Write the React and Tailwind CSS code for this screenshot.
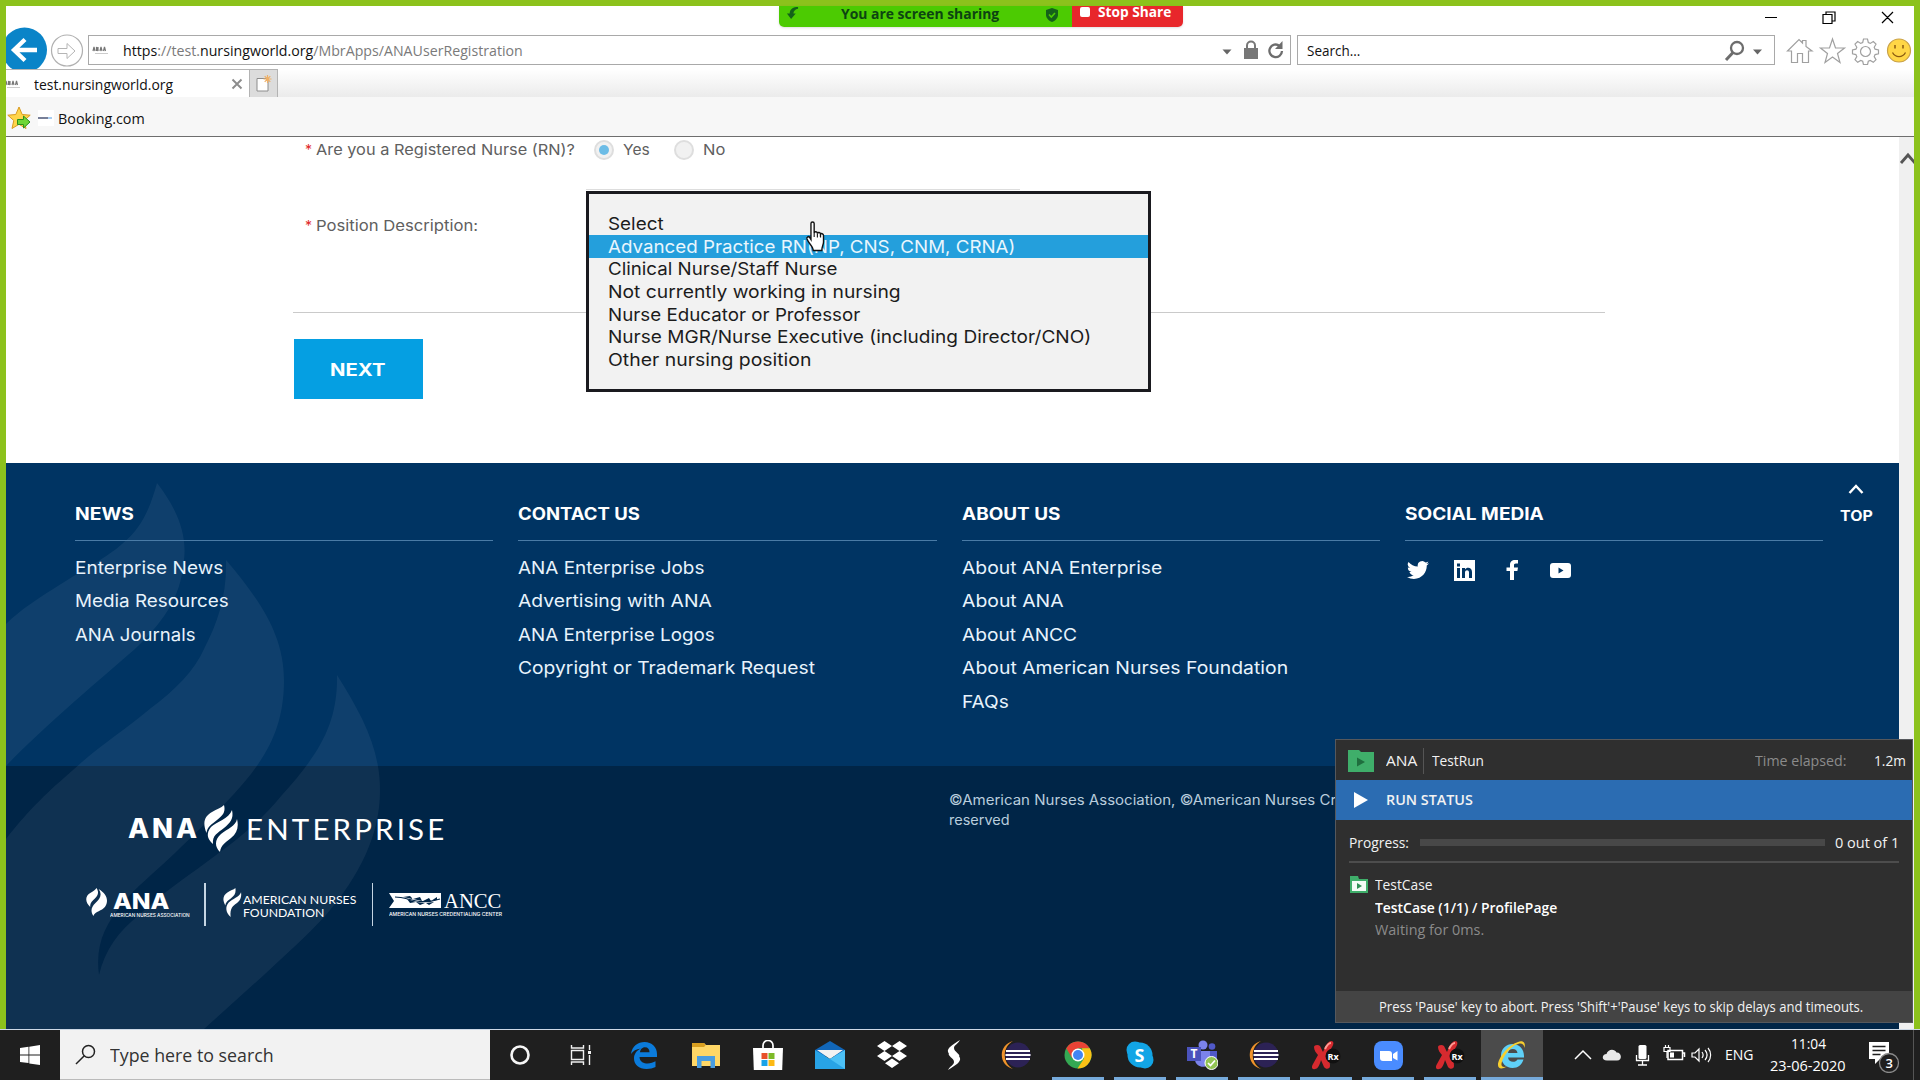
import { useLayoutEffect, useRef, useState } from "react";

const MONT = "font-['Inter',sans-serif]";
const SEGOE = "font-['Open_Sans','Noto_Sans',sans-serif]";

/* One line of text, stretched horizontally to an exact width. */
function Fit({ w, className = "", children }) {
  const ref = useRef(null);
  const [s, setS] = useState(1);
  useLayoutEffect(() => {
    const measure = () => ref.current && setS(w / ref.current.offsetWidth);
    measure();
    document.fonts?.ready.then(measure);
  }, [w]);
  return (
    <span className={"block shrink-0 whitespace-nowrap text-left " + className} style={{ width: w }}>
      <span ref={ref} className="inline-block origin-left whitespace-nowrap" style={{ transform: `scaleX(${s})` }}>
        {children}
      </span>
    </span>
  );
}

function Favicon() {
  return (
    <svg width="18" height="12" viewBox="0 0 18 12" className="shrink-0">
      <path d="M1 7l1-4 1 4M4.500 7V3l1.500 4V3M8 7l1-4 1 4M11.500 7l1-4 1 4" stroke="#777" strokeWidth="1.200" fill="none" />
      <path d="M3 9.500h13" stroke="#ccc" strokeWidth="1" />
    </svg>
  );
}

function ShareBar() {
  return (
    <div className={"absolute left-[779px] top-[6px] z-20 flex h-[21px] w-[404px] rounded-b-[5px] shadow " + SEGOE}>
      <div className="flex h-full w-[293px] items-start rounded-bl-[5px] bg-[#4ccb02] pl-[7px]">
        <svg width="13" height="15" viewBox="0 0 14 16" className="mt-0">
          <path d="M13 1C8 1 4 3 4 8H1l4.500 6 5-6H8C8 5.500 10 3.500 13 3z" fill="#14611a" />
        </svg>
        <Fit w={158} className="ml-[42px] text-[14px] font-bold leading-[16px] text-[#0c4412]">You are screen sharing</Fit>
        <svg width="14" height="16" viewBox="0 0 14 16" className="ml-[46px] mt-px">
          <path d="M7 1l6 2v5c0 3-3 6-6 7-3-1-6-4-6-7V3z" fill="#14611a" />
          <path d="M4 7.500l2.300 2.500L10 6" stroke="#4ccb02" strokeWidth="1.600" fill="none" />
        </svg>
      </div>
      <div className="flex h-full flex-1 rounded-br-[5px] bg-[#e8272b] pl-[8px]">
        <div className="mt-[1px] size-[10px] rounded-[2px] bg-white" />
        <Fit w={73} className="ml-[8px] text-[13.500px] font-bold leading-[13px] text-white">Stop Share</Fit>
      </div>
    </div>
  );
}

function TitleRow() {
  return (
    <div className="flex h-[29px] justify-end pr-[20px]">
      <svg width="130" height="24" viewBox="0 0 130 24" fill="none" stroke="#000" strokeWidth="1.200">
        <path d="M1 11.500h12M59 8.500h9v9h-9zM62 8.500V6h9v9h-3M118 6l11 11M129 6l-11 11" />
      </svg>
    </div>
  );
}

function AddressRow() {
  return (
    <div className="flex h-[34px] items-start">
      <div className="relative h-[34px] w-[82px]">
        <svg width="82" height="42" viewBox="0 0 82 42" className="absolute left-0 top-[-8px]">
          <circle cx="18.500" cy="23" r="22.500" fill="#0a84c8" />
          <path d="M19 12.500 8 23l11 10.500M8.500 23H31" stroke="#fff" strokeWidth="4.300" fill="none" />
          <circle cx="61" cy="23.500" r="15.500" fill="#fff" stroke="#b0b0b0" strokeWidth="1.200" />
          <path d="M52 21.500h9v-5l8 7.500-8 7.500v-5h-9z" stroke="#b5b5b5" strokeWidth="1" fill="#fff" />
        </svg>
      </div>
      <div className="flex h-[30px] w-[1203px] items-center border border-[#a9a9a9] bg-white pl-[3px]">
        <Favicon />
        <Fit w={400} className={"ml-[13px] text-[15px] leading-[20px] text-[#7a7a7a] " + SEGOE}>
          <span className="text-[#111]">https</span>://test.<span className="text-[#111]">nursingworld.org</span>/MbrApps/ANAUserRegistration
        </Fit>
        <svg width="70" height="28" viewBox="0 0 70 28" className="ml-auto mr-[1px]">
          <path d="M3.500 13.500h9l-4.500 5z" fill="#666" />
          <path d="M25 12h14v11H25z" fill="#777" />
          <path d="M28 13V9.500a4 4 0 0 1 8 0V13" stroke="#777" strokeWidth="2" fill="none" />
          <path d="M60.500 9.800A6.300 6.300 0 1 0 63 15" stroke="#6d6d6d" strokeWidth="2.300" fill="none" />
          <path d="M63.500 5v8h-7.500z" fill="#6d6d6d" />
        </svg>
      </div>
      <div className="ml-[6px] flex h-[30px] w-[478px] items-center border border-[#a9a9a9] bg-white pl-[9px]">
        <Fit w={53} className={"pt-px text-[14.500px] leading-[20px] text-[#111] " + SEGOE}>Search...</Fit>
        <svg width="42" height="28" viewBox="0 0 42 28" className="ml-auto mr-[10px]">
          <circle cx="15" cy="12" r="6" stroke="#6d6d6d" strokeWidth="2.300" fill="none" />
          <path d="M11 16.500 4 24" stroke="#6d6d6d" strokeWidth="3" />
          <path d="M31 13.500h9l-4.500 5z" fill="#666" />
        </svg>
      </div>
      <svg width="127" height="30" viewBox="0 0 127 30" className="ml-[11px]" fill="#fff" stroke="#a0a0a0" strokeWidth="1.200">
        <path d="M1.500 16 13 4.500l3.500 3.500V5.500h3.500v6L26 16h-3.500v11.500h-6v-9h-5v9h-6V16z" />
        <path d="M46.500 4l3 9h9l-7 5.500 2.500 9-7.500-5.500-7.500 5.500 2.500-9-7-5.500h9z" />
        <path d="M77.500 4h4l.8 3.500 2 .9 3-1.900 2.700 2.700-1.800 3 .9 2 3.400.8v3.800l-3.400.8-.9 2 1.800 3-2.700 2.700-3-1.900-2 .9-.8 3.400h-4l-.8-3.400-2-.9-3 1.900-2.700-2.700 1.800-3-.9-2-3.400-.8V15l3.400-.8.9-2-1.800-3 2.700-2.700 3 1.900 2-.9z" />
        <circle cx="79.500" cy="16.500" r="5" />
        <circle cx="113" cy="15.500" r="11.500" fill="#ffd646" stroke="#c9a24a" />
        <path d="M109 10v3.500M117 10v3.500" stroke="#8a5a10" strokeWidth="1.500" />
        <path d="M106.500 17.500c3 5.500 10 5.500 13 0" stroke="#8a5a10" strokeWidth="1.300" fill="none" />
      </svg>
    </div>
  );
}

function TabRow() {
  return (
    <div className="flex h-[28px] bg-linear-to-b from-white to-[#ebebeb]">
      <div className="flex h-full w-[243px] items-center border-t border-[#b5b5b5] bg-white">
        <span className="-ml-[2px]"><Favicon /></span>
        <Fit w={139} className={"ml-[12px] pt-[2px] text-[14.500px] leading-[20px] text-[#111] " + SEGOE}>test.nursingworld.org</Fit>
        <svg width="12" height="12" viewBox="0 0 12 12" className="ml-[58px]">
          <path d="M1.500 1.500l9 9M10.500 1.500l-9 9" stroke="#8c8c8c" strokeWidth="1.900" />
        </svg>
      </div>
      <div className="flex h-full w-[29px] items-center justify-center border border-b-0 border-[#b3b3b3] bg-[#dcdcdc]">
        <svg width="17" height="18" viewBox="0 0 17 18">
          <path d="M2 3.500h11v12.500H2z" fill="#fff" stroke="#8c8c8c" />
          <path d="M12.500 0v8M8.500 4h8M9.700 1.200l5.600 5.600M15.300 1.200 9.700 6.800" stroke="#efb066" strokeWidth="1.200" />
        </svg>
      </div>
    </div>
  );
}

function FavoritesRow() {
  return (
    <div className="flex h-[40px] items-center border-b border-[#6e6e6e] bg-[#f7f7f7] pl-px pt-[2px]">
      <svg width="24" height="24" viewBox="0 0 24 24">
        <path d="M12 1l3.200 7.500 8 .7-6 5.300 1.800 8L12 18.300 5 22.500l1.800-8-6-5.300 8-.7z" fill="#ffd54a" stroke="#d99a20" />
        <path d="M10.500 13.500h6V10l6.500 6-6.500 6v-3.500h-6z" fill="#6fd636" stroke="#2b8f1c" />
      </svg>
      <div className="ml-[7px] flex h-[16px] w-[16px] items-center bg-white">
        <div className="h-[2px] w-[10px] bg-[#777f98]" />
        <div className="h-[2px] w-[4px] bg-[#a9cdf0]" />
      </div>
      <Fit w={87} className={"ml-[4px] pt-[2px] text-[14.500px] leading-[20px] text-[#111] " + SEGOE}>Booking.com</Fit>
    </div>
  );
}

const OPTIONS = [
  ["Select", 56],
  ["Advanced Practice RN(NP, CNS, CNM, CRNA)", 407],
  ["Clinical Nurse/Staff Nurse", 229],
  ["Not currently working in nursing", 293],
  ["Nurse Educator or Professor", 252],
  ["Nurse MGR/Nurse Executive (including Director/CNO)", 483],
  ["Other nursing position", 203],
];

function PositionMenu() {
  return (
    <div className="absolute left-[580px] top-[54px] z-10 h-[201px] w-[565px] border-[3px] border-[#1a1a1f] bg-[#f2f2f2] pt-[18px]">
      {OPTIONS.map(([label, w], i) => (
        <div
          key={label}
          className={
            "flex h-[22.800px] items-center pl-[19px] text-[17.500px] leading-[22px] " +
            (i === 1 ? "bg-[#249fdc] pt-[2px] text-[#e9f6fd]" : i === 0 ? "pt-[2px] text-[#1c1c1c]" : "text-[#1c1c1c]")
          }
        >
          <Fit w={w}>{label}</Fit>
        </div>
      ))}
      <svg width="22" height="32" viewBox="0 0 24 32" preserveAspectRatio="none" className="absolute left-[216px] top-[27px]">
        <path
          d="M6.500 2.500c0-2 3.500-2 3.500 0V12c.5-1.700 3.500-1.500 3.500.5.600-1.500 3.400-1.200 3.400.8.700-1.200 3.300-.8 3.300 1.200V21c0 3-1.800 4-1.800 8.500H9c0-4-5-7-6.800-11.500-.7-2 1.700-3.300 3-1.500l1.300 2z"
          fill="#fff" stroke="#111" strokeWidth="1.500"
        />
        <path d="M10 12v4M13.500 12.500v4M17 13.500v3" stroke="#111" strokeWidth="1.200" />
      </svg>
    </div>
  );
}

function FormArea() {
  return (
    <div className={"relative h-[326px] bg-white " + MONT}>
      <div className="flex h-[26px] items-center pl-[299px] text-[15px] leading-[20px] text-[#606060]">
        <span className="w-[11px] text-[14px] text-[#e02828]">*</span>
        <Fit w={259}>Are you a Registered Nurse (RN)?</Fit>
        <div className="ml-[19px] flex size-[20px] items-center justify-center rounded-full border-2 border-[#dedede] bg-[#f1f1f1]">
          <div className="size-[10px] rounded-full bg-[#6cbce6]" />
        </div>
        <Fit w={27} className="ml-[9px]">Yes</Fit>
        <div className="ml-[24px] size-[20px] rounded-full border-2 border-[#dedede] bg-[#f1f1f1]" />
        <Fit w={22} className="ml-[9px]">No</Fit>
      </div>
      <div className="mt-[26px] h-px w-[434px] translate-x-[580px] bg-[#ddd]" />
      <div className="mt-[26px] flex h-[20px] items-center pl-[299px] text-[15px] leading-[20px] text-[#606060]">
        <span className="w-[11px] text-[14px] text-[#e02828]">*</span>
        <Fit w={162}>Position Description:</Fit>
      </div>
      <div className="ml-[287px] mt-[76px] h-px w-[1312px] bg-[#cacaca]" />
      <button className="ml-[288px] mt-[26px] flex h-[60px] w-[129px] items-center bg-[#059fe2] pl-[36px] pt-[3px] text-[17px] font-bold text-white">
        <Fit w={56}>NEXT</Fit>
      </button>
      <PositionMenu />
    </div>
  );
}

function Flame({ className }) {
  return (
    <svg viewBox="0 0 34 47" className={className} preserveAspectRatio="none" fill="#fff">
      <path d="M20 0c2 8-2 11-7 15S3 22 2.500 28C-2 17 1 11 8 7c5-3 9-4 12-7z" />
      <path d="M28 5c2 9-2 13-8 18S8 30 9 39c-6-5-7-11-2-17 5-5 18-8 21-17z" />
      <path d="M33 14c2 8 0 14-6 19s-10 7-11 14c-6-6-5-13 1-18s15-8 16-15z" />
    </svg>
  );
}

/* Small two-tongue flame of the foundation and association marks. */
function SmallFlame({ className, closed }) {
  return (
    <svg viewBox="0 0 20 28" className={className} preserveAspectRatio="none" fill="#fff">
      <path d={closed ? "M10 0c3 5 1 8-2 11s-4 4-4 8C-1 14-1 8 4 5c3-2 5-3 6-5z" : "M13 0c1 5-1 7-4 9.500S3 13 2.500 17C-1 11 0 7 5 4c3-2 6-2 8-4z"} />
      <path d={closed ? "M12 1c8 5 10 12 6 18-3 4-9 4-11 9-3-5-2-9 2-13s7-8 3-14z" : "M19 4c1 6-2 9-5 11s-7 4-6 13c-5-4-6-10-2-14s11-5 13-10z"} />
    </svg>
  );
}

function FooterHeading({ children, w }) {
  return (
    <div className="mb-[10px] h-[46px] border-b border-[#4a7ba6] pt-[8px] text-[17px] font-bold leading-[22px] text-white">
      <Fit w={w}>{children}</Fit>
    </div>
  );
}

const COLUMNS = [
  { title: ["NEWS", 59], links: [["Enterprise News", 148], ["Media Resources", 154], ["ANA Journals", 121]] },
  { title: ["CONTACT US", 122], links: [["ANA Enterprise Jobs", 186], ["Advertising with ANA", 194], ["ANA Enterprise Logos", 197], ["Copyright or Trademark Request", 297]] },
  { title: ["ABOUT US", 98], links: [["About ANA Enterprise", 200], ["About ANA", 102], ["About ANCC", 115], ["About American Nurses Foundation", 326], ["FAQs", 47]] },
];

function Footer() {
  return (
    <div className={"relative " + MONT}>
      <div className="flex h-[303px] bg-[#003463] pl-[69px] pt-[32px]">
        {COLUMNS.map((c) => (
          <div key={c.title[0]} className="relative z-10 mr-[25px] w-[418.400px] shrink-0">
            <FooterHeading w={c.title[1]}>{c.title[0]}</FooterHeading>
            {c.links.map(([t, w]) => (
              <div key={t} className="flex h-[33.500px] items-center text-[17.500px] leading-[22px] text-[#e8f3fc]">
                <Fit w={w}>{t}</Fit>
              </div>
            ))}
          </div>
        ))}
        <div className="w-[418px] shrink-0">
          <FooterHeading w={139}>SOCIAL MEDIA</FooterHeading>
          <div className="flex items-center pl-[2px] pt-[8px]">
            <svg width="22" height="22" viewBox="0 0 24 24" fill="#fff"><path d="M23.950 4.570a10 10 0 0 1-2.820.77 4.960 4.960 0 0 0 2.160-2.720c-.95.550-2 .95-3.130 1.180a4.920 4.920 0 0 0-8.380 4.480C7.690 8.100 4.070 6.130 1.640 3.160a4.920 4.920 0 0 0 1.520 6.570 4.900 4.900 0 0 1-2.230-.61v.06a4.920 4.920 0 0 0 3.950 4.830 5 5 0 0 1-2.210.08 4.940 4.940 0 0 0 4.600 3.420A9.870 9.870 0 0 1 0 19.540a13.990 13.990 0 0 0 7.550 2.210c9.050 0 14-7.500 14-13.980 0-.21 0-.42-.02-.63a9.940 9.940 0 0 0 2.420-2.570z" /></svg>
            <svg width="21" height="21" viewBox="0 0 21 21" className="ml-[25px]"><path d="M0 0h21v21H0z" fill="#fff" /><path d="M3 8h3v10H3zM3 3.500h3v3H3zM8 8h3v1.500c1.500-2.500 7-2.500 7 2.500v6h-3v-5.500c0-3-4-3-4 0V18H8z" fill="#003463" /></svg>
            <svg width="13" height="20" viewBox="0 0 13 20" className="ml-[31px]"><path d="M4 20v-9H.5V7.500H4V5c0-3.500 2-5 5-5h3v3.500h-2C8.300 3.500 8 4.200 8 5.300v2.200h4l-.6 3.500H8v9z" fill="#fff" /></svg>
            <svg width="21" height="15" viewBox="0 0 21 15" className="ml-[31px]"><rect width="21" height="15" rx="3" fill="#fff" /><path d="M8.500 4.500v6l5-3z" fill="#003463" /></svg>
          </div>
        </div>
        <div className="ml-[16px] flex w-[34px] flex-col items-center text-[14px] font-bold leading-[18px] text-white">
          <svg width="16" height="12" viewBox="0 0 16 12" className="-mt-[12px] shrink-0"><path d="M1.500 10 8 3l6.500 7" stroke="#fff" strokeWidth="2.400" fill="none" /></svg>
          <Fit w={33} className="mt-[12px]">TOP</Fit>
        </div>
      </div>
      <div className="flex h-[263px] bg-[#002547]">
        <div className="relative z-10 w-[943px] shrink-0">
          <div className="flex items-center pl-[122px] pt-[39px] text-white">
            <Fit w={72} className="pt-px text-[27px] font-extrabold leading-[46px] tracking-[3px]">ANA</Fit>
            <Flame className="ml-[4px] h-[47px] w-[34px]" />
            <Fit w={201} className="ml-[8px] text-[28px] leading-[46px] tracking-[3px] font-['Lato',sans-serif]">ENTERPRISE</Fit>
          </div>
          <div className="mt-[31px] flex h-[43px] items-center pl-[80px] text-white">
            <SmallFlame closed className="-mt-[6px] h-[28px] w-[21px]" />
            <div className="ml-[3px] w-[82px]">
              <Fit w={56} className="ml-[3px] text-[21px] font-extrabold leading-[20px]">ANA</Fit>
              <Fit w={80} className="text-[5px] font-medium leading-[6px]">AMERICAN NURSES ASSOCIATION</Fit>
            </div>
            <div className="ml-[12px] h-[43px] w-[1.500px] bg-[#c5d5e3]" />
            <SmallFlame className="-mt-[4px] ml-[17px] h-[29px] w-[19px]" />
            <div className="ml-[1px] mt-[4px] w-[113px] text-[11.500px] leading-[12.500px] font-['Lato',sans-serif]">
              <Fit w={113}>AMERICAN NURSES</Fit>
              <Fit w={81}>FOUNDATION</Fit>
            </div>
            <div className="ml-[16px] h-[43px] w-[1.500px] bg-[#c5d5e3]" />
            <div className="ml-[16px] w-[113px]">
              <div className="flex items-center">
                <svg width="52" height="15" viewBox="0 0 52 15"><path d="M0 0h52v15H0l5-7z" fill="#fff" /><path d="M6 4c14 0 24 9 45 2" stroke="#002547" strokeWidth="1.200" fill="none" /><path d="M14 4l7-1 3 3zM24 6l7-2 2 4zM34 8l6-3 2 3zM42 8l6-4v3zM18 6l3 4 6-1zM27 9l4 3 5-2zM37 10l3 2 5-3z" fill="#002547" /></svg>
                <Fit w={57} className="ml-[3px] text-[21px] leading-[18px] font-['Liberation_Serif',serif]">ANCC</Fit>
              </div>
              <Fit w={113} className="text-[5px] font-medium leading-[8px]">AMERICAN NURSES CREDENTIALING CENTER</Fit>
            </div>
          </div>
        </div>
        <div className="relative z-10 w-[500px] pt-[24px] text-[14px] leading-[20px] text-[#b9cddd]">
          <Fit w={387}>©American Nurses Association, ©American Nurses Cr</Fit>
          <Fit w={61}>reserved</Fit>
        </div>
      </div>
      <svg width="400" height="566" viewBox="6 463 400 566" className="absolute left-0 top-0" fill="#fff" fillOpacity="0.060">
        <path d="M157 483C178 510 187 535 184 560C181 600 160 625 135 649C105 675 40 730 6 766V624C20 610 40 597 61 584C90 566 110 555 122 544C142 528 150 508 157 483z" />
        <path d="M226 560C260 600 284 635 284 680C284 730 265 760 233 795C210 820 190 838 175 853C155 872 135 888 122 904C105 925 95 945 99 975C105 950 118 932 139 915C160 895 185 878 204 864C240 838 262 820 282 795C318 755 338 725 337 675C362 715 380 748 380 790C380 835 360 875 326 915C305 938 285 955 265 974L204 1029H6V839C30 808 50 790 73 770C100 745 125 730 151 708C175 690 195 670 204 649C218 622 227 595 226 560z" />
      </svg>
    </div>
  );
}

function RunPanel() {
  return (
    <div className={"absolute left-[1335px] top-[739px] z-30 flex h-[284px] w-[578px] flex-col border border-[#56585c] bg-[#2f2f2f] text-[14.500px] leading-[20px] text-[#f2f2f2] " + SEGOE}>
      <div className="flex h-[40px] items-center pl-[12px] pt-px">
        <svg width="26" height="22" viewBox="0 0 26 22"><path d="M0 0h11l2 2h13v20H0z" fill="#3fae6a" /><path d="M9 7.500v9l8-4.500z" fill="#1f6e3e" /></svg>
        <Fit w={31} className="ml-[12px]">ANA</Fit>
        <div className="mx-[6px] h-[26px] w-px bg-[#555]" />
        <Fit w={52} className="ml-[2px]">TestRun</Fit>
        <Fit w={91} className="ml-[271px] text-[#8b8b8b]">Time elapsed:</Fit>
        <Fit w={32} className="ml-[28px]">1.2m</Fit>
      </div>
      <div className="flex h-[40px] items-center bg-[#2b6cb2] pl-[18px]">
        <svg width="14" height="16" viewBox="0 0 14 16"><path d="M0 0v16l14-8z" fill="#fff" /></svg>
        <Fit w={87} className="ml-[18px] font-semibold">RUN STATUS</Fit>
      </div>
      <div className="mx-[13px] flex h-[43px] items-center border-b-2 border-[#4d4d4d] pt-[4px]">
        <Fit w={60}>Progress:</Fit>
        <div className="ml-[11px] h-[7px] w-[405px] bg-[#484848]" />
        <Fit w={64} className="ml-[10px]">0 out of 1</Fit>
      </div>
      <div className="flex flex-1 items-start pl-[14px] pt-[11px]">
        <svg width="18" height="17" viewBox="0 0 18 17" className="mt-[2px]"><path d="M0 0h8l1 3h9v14H0z" fill="#3fae6a" /><path d="M2 5h14v10H2z" fill="#f2fbf5" /><path d="M7 7v6l5-3z" fill="#2f8f55" /></svg>
        <div className="ml-[7px] mt-px">
          <Fit w={57}>TestCase</Fit>
          <Fit w={182} className="mt-[3px] font-semibold text-white">TestCase (1/1) / ProfilePage</Fit>
          <Fit w={109} className="mt-[2px] text-[#8b8b8b]">Waiting for 0ms.</Fit>
        </div>
      </div>
      <div className="flex h-[31px] items-center bg-[#444] pl-[43px] text-[14px]">
        <Fit w={484}>Press 'Pause' key to abort. Press 'Shift'+'Pause' keys to skip delays and timeouts.</Fit>
      </div>
    </div>
  );
}

function Eclipse() {
  return (
    <svg width="30" height="30" viewBox="0 0 30 30">
      <path d="M12 1C-3 5-3 25 12 29 1 23 1 7 12 1z" fill="#f0932b" />
      <circle cx="17" cy="15" r="12.500" fill="#2c2255" />
      <path d="M5 11h24M4.500 15h25M5 19h24" stroke="#fff" strokeWidth="2.200" />
    </svg>
  );
}

function RxIcon() {
  return (
    <svg width="30" height="30" viewBox="0 0 30 30">
      <path d="M3 7c0-2 4-3 6-1l3 6c2-5 4-10 8-11 3 0 3 3 1 6l-5 9c2 3 3 6 3 10 0 3-4 4-6 1l-3-7c-1 4-3 9-6 9-3 1-4-2-2-5l5-9c-2-2-4-5-4-8z" fill="#d62a2f" />
      <path d="M14 9c2-4 4-6 6-6" stroke="#ff9c94" strokeWidth="2" fill="none" />
      <circle cx="22" cy="16" r="7.500" fill="#111" />
      <text x="16.500" y="19.500" fontSize="9" fontWeight="700" fill="#fff" fontFamily="Open Sans, sans-serif">Rx</text>
    </svg>
  );
}

const Cortana = () => (
  <svg width="22" height="22" viewBox="0 0 22 22"><circle cx="11" cy="11" r="8.500" stroke="#f5f5f5" strokeWidth="2.600" fill="none" /></svg>
);
const TaskView = () => (
  <svg width="22" height="22" viewBox="0 0 22 22" stroke="#f0f0f0" strokeWidth="1.400" fill="none" className="-ml-[3px]">
    <path d="M1.500 1v3h12V1M1.500 21v-3h12v3M1.500 6.500h12v9h-12zM19.500 1v5M19.500 11v10" />
    <path d="M18 7h3v3h-3z" fill="#f0f0f0" stroke="none" />
  </svg>
);
const Edge = () => (
  <svg width="28" height="28" viewBox="0 0 28 28">
    <path d="M1 13C2 5 8 1 14.500 1 22 1 27 6 27 13v3H9.500c.3 5 4.500 6.500 8 6.500 3 0 6-1 8-2.200V26c-2.500 1.300-5.500 2-9 2C9 28 4 23.500 4 17.500 4 13 6.500 9.500 11 7.500 6 8 3 10 1 13zm9-1.800h9.500c0-3-1.500-5-4.500-5s-4.800 2.500-5 5z" fill="#0b7bdb" />
  </svg>
);
const Explorer = () => (
  <svg width="28" height="26" viewBox="0 0 28 26">
    <path d="M0 1h12l2 2h14v21H0z" fill="#ffd766" /><path d="M0 1h12l1.500 2.500L12 5H0z" fill="#d99f20" />
    <path d="M5 26V14h18v12h-4.500v-7h-9v7z" fill="#4a9de0" />
  </svg>
);
const Store = () => (
  <svg width="30" height="30" viewBox="0 0 30 30">
    <path d="M10 9V5.500a5 5 0 0 1 10 0V9" stroke="#fff" strokeWidth="1.700" fill="none" />
    <path d="M0 8h30l-.8 22H.8z" fill="#fff" />
    <path d="M8.500 13h6v6h-6z" fill="#e8502a" /><path d="M15.500 13h6v6h-6z" fill="#7dba28" />
    <path d="M8.500 20h6v6h-6z" fill="#1aa3e8" /><path d="M15.500 20h6v6h-6z" fill="#fdb913" />
  </svg>
);
const Mail = () => (
  <svg width="30" height="30" viewBox="0 0 30 30">
    <path d="M0 10 15 1l15 9v6H0z" fill="#1166b8" /><path d="M2 10h26l-13 9z" fill="#f2f2f2" />
    <path d="M0 10l15 9 15-9v19H0z" fill="#28a3e6" /><path d="M15 19 30 29V10z" fill="#4cc0f5" />
  </svg>
);
const Dropbox = () => (
  <svg width="30" height="28" viewBox="0 0 30 28" fill="#fff">
    <path d="M7.500 0 15 5l-7.500 5L0 5zM22.500 0 30 5l-7.500 5L15 5zM7.500 10l7.500 5-7.500 5L0 15zM22.500 10l7.500 5-7.500 5-7.500-5zM15 17.500l7 4.700-7 4.700-7-4.700z" />
  </svg>
);
const Bolt = () => (
  <svg width="16" height="30" viewBox="0 0 16 30" fill="#fff">
    <path d="M14 0C6 5 1 8 2 12c1 3 6 5 7 9l4-4c2-3-5-5-5-9 0-3 4-4 6-8zM2 30c8-5 13-8 12-12-1-3-6-5-7-9l-4 4c-2 3 5 5 5 9 0 3-4 4-6 8z" />
  </svg>
);
const Chrome = () => (
  <svg width="28" height="28" viewBox="0 0 28 28">
    <circle cx="14" cy="14" r="13.500" fill="#34a853" />
    <path d="M2.300 7.200A13.500 13.500 0 0 1 25.700 7.300H14L8 17z" fill="#ea4335" />
    <path d="M25.700 7.300A13.500 13.500 0 0 1 13.500 27.500L20 17.500 18 7.300z" fill="#fbc116" />
    <circle cx="14" cy="14" r="6.500" fill="#fff" /><circle cx="14" cy="14" r="5" fill="#4285f4" />
  </svg>
);
const Skype = () => (
  <svg width="28" height="28" viewBox="0 0 28 28">
    <circle cx="14" cy="14" r="12.500" fill="#12a5e6" /><circle cx="9" cy="9" r="8.500" fill="#12a5e6" /><circle cx="19" cy="19" r="8.500" fill="#12a5e6" />
    <text x="8.500" y="20.500" fontSize="18" fontWeight="700" fill="#fff" fontFamily="Open Sans, sans-serif">S</text>
  </svg>
);
const Teams = () => (
  <svg width="32" height="30" viewBox="0 0 32 30">
    <circle cx="17" cy="5" r="4.500" fill="#7b83eb" /><circle cx="26" cy="6.500" r="3.300" fill="#5059c9" />
    <path d="M20 11h11v8c0 3-3 5-6 5z" fill="#5059c9" /><path d="M9 11h15v9c0 9-14 9-15 0z" fill="#7b83eb" />
    <path d="M1 7h14v14H1z" fill="#4b53bc" />
    <text x="4.500" y="18" fontSize="12" fontWeight="700" fill="#fff" fontFamily="Open Sans, sans-serif">T</text>
    <circle cx="25.500" cy="23" r="6.500" fill="#92c353" stroke="#fff" /><path d="M22 23l2.500 2.500 4.500-5" stroke="#fff" strokeWidth="1.700" fill="none" />
  </svg>
);
const Zoom = () => (
  <svg width="29" height="29" viewBox="0 0 29 29">
    <rect width="29" height="29" rx="8" fill="#4a8cff" /><path d="M6 10h9a3 3 0 0 1 3 3v7H9a3 3 0 0 1-3-3zM19 13l4.500-3v9.500L19 17z" fill="#fff" />
  </svg>
);
const IE = () => (
  <svg width="32" height="30" viewBox="0 0 32 30">
    <path d="M5 15C5.500 8 10.500 4 16.500 4 23.500 4 28 9 28 16v1.500H12c.4 3 2.500 4.300 5 4.300 2 0 3.500-.8 4.500-2.300h6C26 24.500 22 28 16.500 28 10 28 5 23 5 16zm7-2h9.500c-.4-2.500-2-4-4.700-4s-4.400 1.500-4.800 4z" fill="#5fd0f7" />
    <path d="M28.500 8C30 3 27 0 22 2 12 5 2 18 2 25c0 4 4 4.500 9 1.500-4 1-6 0-5.500-3C7 16 15 6 22 4c4-1.300 6 .5 6.500 4z" fill="#f8cf2e" />
  </svg>
);

const APPS = [
  [Cortana], [TaskView], [Edge], [Explorer], [Store], [Mail], [Dropbox], [Bolt], [Eclipse],
  [Chrome, 1], [Skype, 1], [Teams, 1], [Eclipse, 1], [RxIcon, 1], [Zoom, 1], [RxIcon, 1], [IE, 2],
];

function Taskbar() {
  return (
    <div className={"flex h-[51px] w-full border-t border-[#cdd9e6] bg-[#1f1f1f] " + SEGOE}>
      <div className="flex w-[60px] items-center justify-center">
        <svg width="20" height="20" viewBox="0 0 20 20" fill="#fff"><path d="M0 3l8.500-1.200v7.700H0zM9.300 1.700 20 0v9.500H9.300zM0 10.400h8.500v7.700L0 17zM9.300 10.400H20V20L9.300 18.400z" /></svg>
      </div>
      <div className="flex w-[430px] items-center border-b border-[#bbb] bg-[#f2f2f2] pl-[15px]">
        <svg width="21" height="21" viewBox="0 0 21 21" fill="none" stroke="#222" strokeWidth="1.500"><circle cx="13.500" cy="7.500" r="6" /><path d="M9.300 11.700 1 20" /></svg>
        <Fit w={164} className="ml-[14px] text-[18px] leading-[24px] text-[#333]">Type here to search</Fit>
      </div>
      <div className="-ml-[1px] flex">
        {APPS.map(([Icon, state], i) => (
          <div key={i} className={"relative flex h-full w-[62px] items-center justify-center " + (state === 2 ? "bg-[#4b4b4b]" : "")}>
            <Icon />
            {state ? <div className={"absolute bottom-0 h-[3px] bg-[#76aadb] " + (state === 2 ? "inset-x-0" : "inset-x-[5px]")} /> : null}
          </div>
        ))}
      </div>
      <div className="flex items-center pl-[30px] text-white">
        <svg width="142" height="26" viewBox="0 0 142 26" fill="none" stroke="#fff" strokeWidth="1.500">
          <path d="M2 17l8-8 8 8" />
          <path d="M34 18.500c-6 0-5-6.500-.5-6.500 1-5 8-6 10-1.500 5-.5 6.500 8 .5 8z" fill="#e8e8e8" stroke="none" />
          <rect x="65.500" y="3" width="8" height="14" rx="1.500" fill="#fff" stroke="none" />
          <path d="M63.500 13v5.500h12V13M69.500 19v4M65 23h9" strokeWidth="1.300" />
          <path d="M95 8.500h14.500v9H95zM110 11h1.500v4" /><path d="M97 10.500h4v5h-4z" fill="#fff" stroke="none" />
          <path d="M91 5.500h6v4h-6zM92.500 3v2M95.500 3v2M94 10v6" strokeWidth="1.200" />
          <path d="M119 11h3l4-4v12l-4-4h-3zM129 10c1.500 2 1.500 4 0 6M132 8c2.500 3 2.500 7 0 10M135 6c3.500 4 3.500 10 0 14" strokeWidth="1.200" />
        </svg>
        <Fit w={29} className="ml-[10px] text-[14px] leading-[20px]">ENG</Fit>
        <div className="ml-[16px] flex w-[76px] flex-col items-center text-[14.500px] leading-[22px]">
          <Fit w={35}>11:04</Fit>
          <Fit w={76}>23-06-2020</Fit>
        </div>
        <svg width="36" height="36" viewBox="0 0 36 36" className="ml-[20px]">
          <path d="M3 5h20v17h-9l-5 5v-5H3z" fill="#fff" /><path d="M6.500 9.500h13M6.500 13.500h13M6.500 17.500h8" stroke="#1f1f1f" strokeWidth="1.500" />
          <circle cx="23" cy="26" r="9.500" fill="#1f1f1f" stroke="#8a8a8a" strokeWidth="1.300" />
          <text x="19.500" y="31" fontSize="13" fontWeight="600" fill="#fff" fontFamily="Open Sans, sans-serif">3</text>
        </svg>
        <div className="ml-[11px] h-[50px] w-px bg-[#555]" />
      </div>
    </div>
  );
}

export default function App() {
  return (
    <div className="relative flex h-[1080px] w-[1920px] flex-col overflow-hidden bg-white">
      <div className="flex h-[1029px] flex-col overflow-hidden border-x-[6px] border-t-[6px] border-[#8cc21c]">
        <TitleRow />
        <AddressRow />
        <TabRow />
        <FavoritesRow />
        <div className="flex h-[892px] overflow-hidden">
          <div className="w-[1893px] shrink-0">
            <FormArea />
            <Footer />
          </div>
          <div className="w-[15px] shrink-0 overflow-hidden bg-[#f0f0f0] pt-[14px]">
            <svg width="17" height="14" viewBox="0 0 17 14"><path d="M2 12l7-8 7 8" stroke="#555" strokeWidth="2.800" fill="none" /></svg>
          </div>
        </div>
      </div>
      <Taskbar />
      <ShareBar />
      <RunPanel />
    </div>
  );
}
